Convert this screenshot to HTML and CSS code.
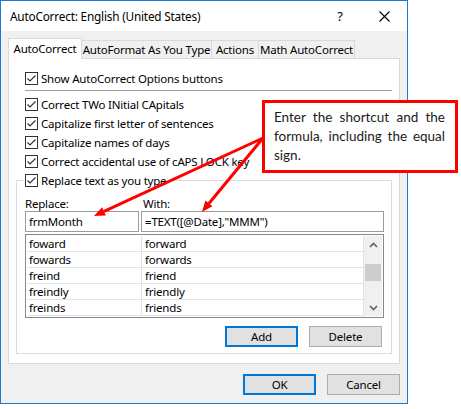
FILE: index.html
```html
<!DOCTYPE html>
<html>
<head>
<meta charset="utf-8">
<link rel="stylesheet" href="styles.css">
</head>
<body>
<div class="page">
  <div class="window">
    <div class="titlebar">
      <span class="title">AutoCorrect: English (United States)</span>
      <span class="help">?</span>
      <svg class="close" width="11" height="11" viewBox="0 0 11 11"><path d="M0.5 0.5 L10.5 10.5 M10.5 0.5 L0.5 10.5" stroke="#000" stroke-width="1.1" fill="none"/></svg>
    </div>
    <div class="content">
      <div class="tabs">
        <div class="tab active">AutoCorrect</div>
        <div class="tab t2">AutoFormat As You Type</div>
        <div class="tab t3">Actions</div>
        <div class="tab t4">Math AutoCorrect</div>
      </div>
      <div class="panel">
        <div class="check show"><span class="box"><svg width="11" height="11" viewBox="0 0 11 11"><path d="M1.5 5.5 L4 8 L9.5 2.5" stroke="#333" stroke-width="1.2" fill="none"/></svg></span><span>Show AutoCorrect Options buttons</span></div>
        <div class="sep"></div>
        <div class="checks">
          <div class="check"><span class="box"><svg width="11" height="11" viewBox="0 0 11 11"><path d="M1.5 5.5 L4 8 L9.5 2.5" stroke="#333" stroke-width="1.2" fill="none"/></svg></span><span>Correct TWo INitial CApitals</span></div>
          <div class="check"><span class="box"><svg width="11" height="11" viewBox="0 0 11 11"><path d="M1.5 5.5 L4 8 L9.5 2.5" stroke="#333" stroke-width="1.2" fill="none"/></svg></span><span>Capitalize first letter of sentences</span></div>
          <div class="check"><span class="box"><svg width="11" height="11" viewBox="0 0 11 11"><path d="M1.5 5.5 L4 8 L9.5 2.5" stroke="#333" stroke-width="1.2" fill="none"/></svg></span><span>Capitalize names of days</span></div>
          <div class="check"><span class="box"><svg width="11" height="11" viewBox="0 0 11 11"><path d="M1.5 5.5 L4 8 L9.5 2.5" stroke="#333" stroke-width="1.2" fill="none"/></svg></span><span>Correct accidental use of cAPS LOCK key</span></div>
        </div>
        <div class="group">
          <div class="check legend"><span class="box"><svg width="11" height="11" viewBox="0 0 11 11"><path d="M1.5 5.5 L4 8 L9.5 2.5" stroke="#333" stroke-width="1.2" fill="none"/></svg></span><span>Replace text as you type</span></div>
          <div class="labels"><span class="lab-replace">Replace:</span><span>With:</span></div>
          <div class="inputs">
            <div class="input in-replace">frmMonth</div>
            <div class="input in-with">=TEXT([@Date],"MMM")</div>
          </div>
          <div class="list">
            <div class="rows">
              <div class="row"><span class="c1">foward</span><span class="c2">forward</span></div>
              <div class="row"><span class="c1">fowards</span><span class="c2">forwards</span></div>
              <div class="row"><span class="c1">freind</span><span class="c2">friend</span></div>
              <div class="row"><span class="c1">freindly</span><span class="c2">friendly</span></div>
              <div class="row"><span class="c1">freinds</span><span class="c2">friends</span></div>
            </div>
            <div class="scroll">
              <div class="sb-btn"><svg width="9" height="6" viewBox="0 0 9 6"><path d="M1 5 L4.5 1.5 L8 5" stroke="#606060" stroke-width="1.6" fill="none"/></svg></div>
              <div class="sb-gap"></div>
              <div class="thumb"></div>
              <div class="sb-fill"></div>
              <div class="sb-btn"><svg width="9" height="6" viewBox="0 0 9 6"><path d="M1 1 L4.5 4.5 L8 1" stroke="#606060" stroke-width="1.6" fill="none"/></svg></div>
            </div>
          </div>
          <div class="gbuttons">
            <button class="btn default">Add</button>
            <button class="btn">Delete</button>
          </div>
        </div>
      </div>
      <div class="footer">
        <button class="btn default">OK</button>
        <button class="btn">Cancel</button>
      </div>
    </div>
  </div>
  <div class="callout">Enter the shortcut and the formula, including the equal sign.</div>
  <svg class="arrows" width="461" height="409" viewBox="0 0 461 409">
    <line x1="263" y1="138" x2="104" y2="211.4" stroke="#f00" stroke-width="3"/>
    <polygon points="94,216 105.9,215.5 102.1,207.3" fill="#f00"/>
    <line x1="263" y1="138" x2="208.9" y2="203.5" stroke="#f00" stroke-width="3"/>
    <polygon points="202,212 212.4,206.3 205.4,200.6" fill="#f00"/>
  </svg>
</div>
</body>
</html>
```

FILE: styles.css
```css
body {
  margin: 0;
  background: #fff;
  font-family: "Noto Sans", sans-serif;
  font-size: 11.5px;
  letter-spacing: -0.2px;
  color: #000;
}
.page {
  position: relative;
  width: 461px;
  height: 409px;
}
.window {
  width: 406px;
  height: 402px;
  border: 1px solid #1c7bd0;
  background: #f0f0f0;
  display: flex;
  flex-direction: column;
}
.titlebar {
  height: 30px;
  background: #fff;
  display: flex;
  align-items: center;
  flex-shrink: 0;
}
.title {
  margin-left: 9px;
  flex: 1;
  white-space: nowrap;
  font-size: 11.8px;
}
.help {
  width: 14px;
  text-align: center;
  font-size: 13px;
}
.close {
  margin: 0 17px 0 32px;
}
.content {
  padding-left: 7px;
  display: flex;
  flex-direction: column;
}
.tabs {
  display: flex;
  align-items: flex-end;
  height: 21px;
  margin-top: 7px;
}
.tab {
  box-sizing: border-box;
  height: 18px;
  margin-bottom: 1px;
  border: 1px solid #d9d9d9;
  border-bottom: none;
  border-left: none;
  background: #f0f0f0;
  text-align: center;
  line-height: 18px;
  white-space: nowrap;
}
.tab.active {
  height: 21px;
  margin-bottom: 0;
  width: 74px;
  border-left: 1px solid #d9d9d9;
  background: #fff;
  line-height: 19px;
  position: relative;
  z-index: 1;
}
.t2 { width: 130px; }
.t3 { width: 47px; }
.t4 { width: 96px; }
.panel {
  box-sizing: border-box;
  width: 392px;
  height: 306px;
  margin-top: -1px;
  border: 1px solid #d9d9d9;
  background: #fff;
}
.check {
  display: flex;
  align-items: center;
  height: 13px;
  gap: 3px;
  white-space: nowrap;
}
.box {
  box-sizing: border-box;
  width: 13px;
  height: 13px;
  border: 1px solid #333;
  background: #fff;
  display: flex;
  flex-shrink: 0;
}
.show {
  margin: 13px 0 0 16px;
}
.sep {
  height: 1px;
  background: #a0a0a0;
  margin: 5px 7px 0 16px;
}
.checks {
  margin: 7px 0 0 16px;
  display: flex;
  flex-direction: column;
  gap: 6px;
}
.group {
  box-sizing: border-box;
  height: 174px;
  margin: 12px 7px 0 7px;
  border: 1px solid #dcdcdc;
}
.legend {
  margin: -7px 0 0 6px;
  padding: 0 2px;
  width: fit-content;
  background: #fff;
}
.labels {
  display: flex;
  height: 15px;
  line-height: 15px;
  margin: 9px 0 0 8px;
}
.lab-replace {
  width: 118px;
}
.inputs {
  display: flex;
  gap: 2px;
  height: 21px;
  margin-left: 8px;
}
.input {
  box-sizing: border-box;
  height: 21px;
  border: 1px solid #9c9c9c;
  padding-left: 3px;
  line-height: 19px;
  white-space: nowrap;
}
.in-replace { width: 114px; }
.in-with { width: 243px; }
.list {
  box-sizing: border-box;
  width: 359px;
  height: 84px;
  margin: 2px 0 0 8px;
  border: 1px solid #828790;
  padding: 1px;
  display: flex;
}
.rows {
  box-sizing: border-box;
  width: 337px;
  border-right: 1px solid #e3e3e3;
}
.row {
  box-sizing: border-box;
  height: 16px;
  border-bottom: 1px solid #e3e3e3;
  display: flex;
  line-height: 15px;
}
.c1 {
  box-sizing: border-box;
  width: 115px;
  padding-left: 2px;
  border-right: 1px solid #e3e3e3;
}
.c2 {
  padding-left: 3px;
}
.scroll {
  width: 18px;
  background: #f0f0f0;
  display: flex;
  flex-direction: column;
}
.sb-btn {
  height: 17px;
  display: flex;
  align-items: center;
  justify-content: center;
}
.sb-gap { height: 11px; }
.thumb {
  height: 17px;
  margin: 0 1px;
  background: #cdcdcd;
}
.sb-fill { flex: 1; }
.gbuttons {
  display: flex;
  justify-content: flex-end;
  gap: 11px;
  margin: 8px 9px 0 0;
}
.btn {
  box-sizing: border-box;
  width: 73px;
  height: 21px;
  padding: 0;
  border: 1px solid #adadad;
  background: #e1e1e1;
  font-family: inherit;
  font-size: 11.5px;
  letter-spacing: -0.2px;
  color: #000;
}
.btn.default {
  border: 2px solid #0078d7;
}
.footer {
  display: flex;
  justify-content: flex-end;
  gap: 11px;
  margin: 10px 7px 0 0;
}
.callout {
  position: absolute;
  left: 262px;
  top: 100px;
  box-sizing: border-box;
  width: 196px;
  height: 73px;
  border: 3px solid #f00;
  background: #fff;
  padding: 5px 10px 0 9px;
  font-family: Lato, sans-serif;
  font-size: 13.5px;
  letter-spacing: 0;
  line-height: 19px;
  text-align: justify;
  color: #1a1a1a;
}
.arrows {
  position: absolute;
  left: 0;
  top: 0;
  pointer-events: none;
}
```
